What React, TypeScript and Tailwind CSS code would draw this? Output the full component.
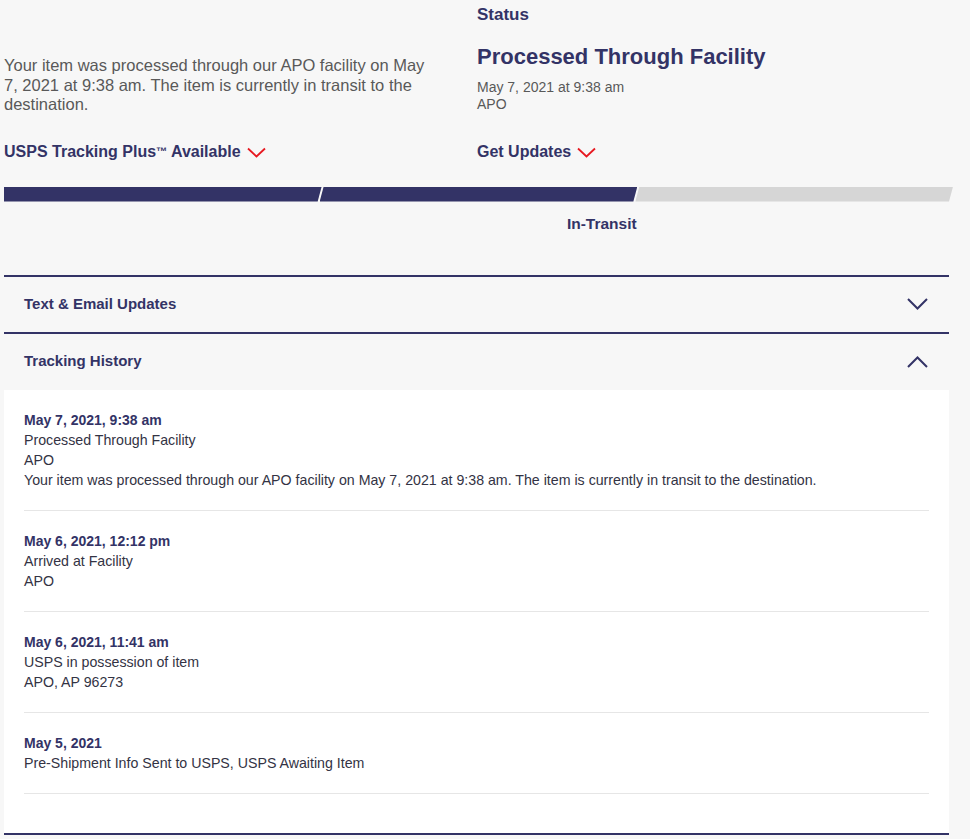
import React from 'react';

const navy = 'text-[#333366]';

const RedChevron = () => (
  <svg width="19" height="11" viewBox="0 0 19 11" className="ml-[6px] mt-[2px]">
    <path d="M1 1.5 L9.5 9.5 L18 1.5" fill="none" stroke="#e71921" strokeWidth="1.8" />
  </svg>
);

const Chevron = ({ up }: { up?: boolean }) => (
  <svg width="21" height="12" viewBox="0 0 21 12">
    <path
      d={up ? 'M1 11 L10.5 1.5 L20 11' : 'M1 1 L10.5 10.5 L20 1'}
      fill="none"
      stroke="#333366"
      strokeWidth="2"
    />
  </svg>
);

interface HistoryItem {
  date: string;
  lines: string[];
}

const history: HistoryItem[] = [
  {
    date: 'May 7, 2021, 9:38 am',
    lines: [
      'Processed Through Facility',
      'APO',
      'Your item was processed through our APO facility on May 7, 2021 at 9:38 am. The item is currently in transit to the destination.',
    ],
  },
  { date: 'May 6, 2021, 12:12 pm', lines: ['Arrived at Facility', 'APO'] },
  { date: 'May 6, 2021, 11:41 am', lines: ['USPS in possession of item', 'APO, AP 96273'] },
  { date: 'May 5, 2021', lines: ['Pre-Shipment Info Sent to USPS, USPS Awaiting Item'] },
];

export default function App() {
  return (
    <div className="min-h-screen bg-[#f7f7f7] pl-[4px] pr-[21px] font-['Liberation_Sans',Arial,sans-serif]">
      {/* summary */}
      <div className="flex">
        <div className="w-[445px] mr-[28px] pt-[56px] pr-[12px]">
          <p className="text-[16.5px] leading-[19.5px] text-[#595959]">
            Your item was processed through our APO facility on May 7, 2021 at 9:38 am. The item is currently in transit to the destination.
          </p>
        </div>
        <div className="flex-1 pt-[4px]">
          <h3 className={`text-[17px] leading-[22px] font-bold ${navy}`}>Status</h3>
          <h2 className={`mt-[17px] text-[22px] leading-[28px] font-bold ${navy}`}>Processed Through Facility</h2>
          <div className="mt-[8px] text-[14px] leading-[17px] text-[#595959]">
            <p>May 7, 2021 at 9:38 am</p>
            <p>APO</p>
          </div>
        </div>
      </div>

      <div className="flex mt-[27px]">
        <div className={`w-[445px] mr-[28px] flex items-center text-[16px] leading-[20px] font-bold ${navy}`}>
          <span>
            USPS Tracking Plus<sup className="text-[11px] relative -top-[2px]">™</sup> Available
          </span>
          <RedChevron />
        </div>
        <div className={`flex-1 flex items-center text-[16px] leading-[20px] font-bold ${navy}`}>
          <span>Get Updates</span>
          <RedChevron />
        </div>
      </div>

      {/* progress */}
      <div className="mt-[25px] mr-[-4px] flex h-[15px]">
        <div className="flex-1 bg-[#333366] [clip-path:polygon(0_0,100%_0,calc(100%-4px)_100%,0_100%)]" />
        <div className="flex-1 ml-[-2px] bg-[#333366] [clip-path:polygon(4px_0,100%_0,calc(100%-4px)_100%,0_100%)]" />
        <div className="flex-1 ml-[-2px] bg-[#d6d6d6] [clip-path:polygon(4px_0,100%_0,calc(100%-4px)_100%,0_100%)]" />
      </div>
      <div className="flex mr-[-4px]">
        <div className="flex-1" />
        <div className={`flex-1 text-right pr-[0px] pt-[13px] text-[15.5px] leading-[18px] font-bold ${navy}`}>In-Transit</div>
        <div className="flex-1" />
      </div>

      {/* accordions */}
      <div className="mt-[42px] border-t-2 border-[#333366]">
        <div className={`flex items-center justify-between h-[55px] pl-[20px] pr-[21px] text-[15px] font-bold ${navy}`}>
          <span>Text &amp; Email Updates</span>
          <Chevron />
        </div>
      </div>
      <div className="border-t-2 border-[#333366]">
        <div className={`flex items-center justify-between h-[56px] pl-[20px] pr-[21px] text-[15px] font-bold ${navy}`}>
          <span>Tracking History</span>
          <Chevron up />
        </div>
        <div className="bg-white px-[20px] pt-[20px] pb-[39px]">
          {history.map((h, i) => (
            <div key={i} className={`border-b border-[#e6e6e6] pb-[20px] ${i > 0 ? 'pt-[20px]' : ''}`}>
              <p className="text-[14px] leading-[20px] font-bold text-[#333366]">{h.date}</p>
              {h.lines.map((l, j) => (
                <p key={j} className="text-[14.2px] leading-[20px] text-[#333344]">
                  {l}
                </p>
              ))}
            </div>
          ))}
        </div>
      </div>
      <div className="border-t-2 border-[#333366] h-[40px]" />
    </div>
  );
}
